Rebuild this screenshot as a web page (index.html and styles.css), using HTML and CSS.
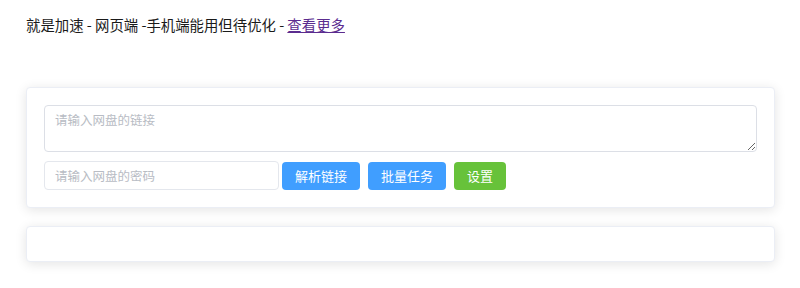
FILE: index.html
```html
<!DOCTYPE html>
<html lang="zh-CN">
<head>
<meta charset="utf-8">
<title>网盘加速</title>
<link rel="stylesheet" href="styles.css">
</head>
<body>
<div class="page">
  <p class="intro">就是加速 - 网页端 -手机端能用但待优化 - <a class="more" href="#">查看更多</a></p>
  <div class="card">
    <textarea class="link-input" placeholder="请输入网盘的链接"></textarea>
    <div class="row">
      <input class="pwd-input" type="text" placeholder="请输入网盘的密码">
      <button class="btn btn-blue btn-first">解析链接</button>
      <button class="btn btn-blue">批量任务</button>
      <button class="btn btn-green">设置</button>
    </div>
  </div>
  <div class="card card-empty"></div>
</div>
</body>
</html>
```
FILE: styles.css
```css
html, body {
  margin: 0;
  padding: 0;
  background: #ffffff;
}
body {
  font-family: "Noto Sans CJK SC", "Noto Sans", sans-serif;
  color: #1a1a1a;
}
.page {
  padding: 15px 25px 24px 26px;
}
.intro {
  margin: 0;
  font-size: 14.4px;
  line-height: 20px;
}
.more {
  color: #5b2c8f;
  text-decoration: underline;
}
.card {
  margin-top: 52px;
  background: #fff;
  border: 1px solid #ebeef5;
  border-radius: 4px;
  box-shadow: 0 2px 12px rgba(0, 0, 0, 0.11);
  padding: 17px;
}
.card-empty {
  margin-top: 18px;
  height: 0;
}
.link-input {
  display: block;
  box-sizing: border-box;
  width: 100%;
  height: 47px;
  margin: 0;
  padding: 5px 10px;
  border: 1px solid #dcdfe6;
  border-radius: 4px;
  font-family: inherit;
  font-size: 12.5px;
  line-height: 18px;
  color: #606266;
  resize: vertical;
  outline: none;
}
.row {
  display: flex;
  align-items: center;
  margin-top: 9px;
}
.pwd-input {
  box-sizing: border-box;
  width: 235px;
  height: 29px;
  margin: 0;
  padding: 0 10px;
  border: 1px solid #e4e7ed;
  border-radius: 4px;
  font-family: inherit;
  font-size: 12.5px;
  color: #606266;
  outline: none;
}
::placeholder {
  color: #b8bcc4;
}
.btn {
  box-sizing: border-box;
  height: 28px;
  margin: 0 0 0 8px;
  padding: 0 13px;
  border: none;
  border-radius: 4px;
  font-family: inherit;
  font-size: 13px;
  color: #fff;
  cursor: pointer;
}
.btn-first {
  margin-left: 3px;
}
.btn-blue {
  background: #409eff;
}
.btn-green {
  background: #67c23a;
}
```
